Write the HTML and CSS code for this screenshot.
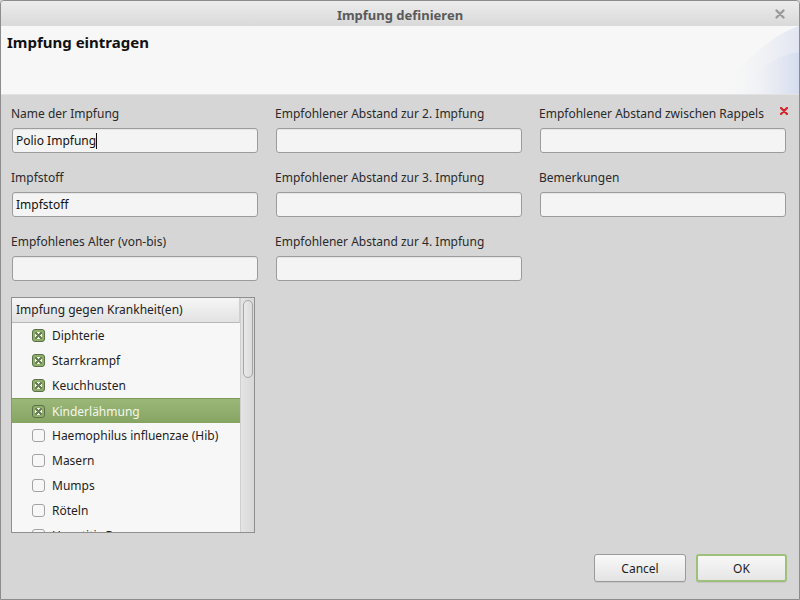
FILE: index.html
```html
<!DOCTYPE html>
<html lang="de">
<head>
<meta charset="utf-8">
<title>Impfung definieren</title>
<link rel="stylesheet" href="styles.css">
</head>
<body>
<div class="window">
  <div class="titlebar">
    <span class="title">Impfung definieren</span>
    <span class="close">
      <svg width="10" height="10" viewBox="0 0 10 10"><path d="M1.5 1.5 L8.5 8.5 M8.5 1.5 L1.5 8.5" stroke="#9a9a9a" stroke-width="2.4" stroke-linecap="round"/></svg>
    </span>
  </div>
  <div class="banner">
    <h1 class="banner-title">Impfung eintragen</h1>
    <svg class="banner-deco" width="120" height="68" viewBox="0 0 120 68" preserveAspectRatio="none">
      <defs>
        <linearGradient id="g1" x1="0" y1="0" x2="1" y2="0">
          <stop offset="0" stop-color="#f7f7f7" stop-opacity="0"/>
          <stop offset="1" stop-color="#dbe1f0"/>
        </linearGradient>
        <linearGradient id="g2" x1="0" y1="0" x2="1" y2="0">
          <stop offset="0" stop-color="#f7f7f7" stop-opacity="0"/>
          <stop offset="1" stop-color="#d6ddef"/>
        </linearGradient>
      </defs>
      <path d="M40 68 C 60 40, 90 10, 120 0 L120 68 Z" fill="url(#g1)" opacity="0.8"/>
      <path d="M60 68 C 75 45, 95 30, 120 26 L120 68 Z" fill="url(#g2)"/>
    </svg>
  </div>
  <div class="content">
    <span class="error-mark">
      <svg width="8" height="8" viewBox="0 0 8 8"><path d="M1 1 L7 7 M7 1 L1 7" stroke="#d9212b" stroke-width="2.2" stroke-linecap="round"/></svg>
    </span>
    <div class="fields">
      <div class="field">
        <label class="label">Name der Impfung</label>
        <div class="input">Polio Impfung<span class="caret"></span></div>
      </div>
      <div class="field">
        <label class="label">Empfohlener Abstand zur 2. Impfung</label>
        <div class="input"></div>
      </div>
      <div class="field">
        <label class="label">Empfohlener Abstand zwischen Rappels</label>
        <div class="input"></div>
      </div>
      <div class="field">
        <label class="label">Impfstoff</label>
        <div class="input">Impfstoff</div>
      </div>
      <div class="field">
        <label class="label">Empfohlener Abstand zur 3. Impfung</label>
        <div class="input"></div>
      </div>
      <div class="field">
        <label class="label">Bemerkungen</label>
        <div class="input"></div>
      </div>
      <div class="field">
        <label class="label">Empfohlenes Alter (von-bis)</label>
        <div class="input"></div>
      </div>
      <div class="field">
        <label class="label">Empfohlener Abstand zur 4. Impfung</label>
        <div class="input"></div>
      </div>
    </div>

    <div class="listbox">
      <div class="list-main">
        <div class="list-header">Impfung gegen Krankheit(en)</div>
        <div class="list-items">
          <div class="item"><span class="cb checked"></span>Diphterie</div>
          <div class="item"><span class="cb checked"></span>Starrkrampf</div>
          <div class="item"><span class="cb checked"></span>Keuchhusten</div>
          <div class="item selected"><span class="cb checked"></span>Kinderlähmung</div>
          <div class="item"><span class="cb"></span>Haemophilus influenzae (Hib)</div>
          <div class="item"><span class="cb"></span>Masern</div>
          <div class="item"><span class="cb"></span>Mumps</div>
          <div class="item"><span class="cb"></span>Röteln</div>
          <div class="item"><span class="cb"></span>Hepatitis B</div>
        </div>
      </div>
      <div class="scrollbar"><div class="thumb"></div></div>
    </div>

    <div class="buttons">
      <button class="btn">Cancel</button>
      <button class="btn default">OK</button>
    </div>
  </div>
</div>
</body>
</html>
```

FILE: styles.css
```css
* { box-sizing: border-box; }
html, body {
  margin: 0;
  padding: 0;
  width: 800px;
  height: 600px;
  overflow: hidden;
  background: #d6d6d6;
}
body {
  font-family: "Noto Sans", "DejaVu Sans", sans-serif;
  font-size: 12px;
  color: #1e1e1e;
}
.window {
  width: 800px;
  height: 600px;
  border: 1px solid #8c8c8c;
  border-radius: 4px 4px 0 0;
  background: #d6d6d6;
  display: flex;
  flex-direction: column;
  overflow: hidden;
}
.titlebar {
  height: 25px;
  flex: none;
  background: linear-gradient(#ececec, #d9d9d9);
  display: flex;
  align-items: center;
  justify-content: center;
  position: relative;
}
.title {
  font-weight: bold;
  font-size: 13px;
  color: #5a5a5a;
  margin-top: 2px;
}
.close {
  position: absolute;
  right: 14px;
  top: 8px;
  display: flex;
}
.banner {
  height: 69px;
  flex: none;
  background: #f7f7f7;
  position: relative;
  border-bottom: 1px solid #e2e2e2;
}
.banner-title {
  margin: 0;
  padding: 6px 0 0 6px;
  font-size: 15px;
  font-weight: bold;
  color: #111;
  line-height: 20px;
}
.banner-deco {
  position: absolute;
  right: 0;
  top: 0;
}
.content {
  flex: 1;
  position: relative;
  padding: 10px 12px 0 10px;
  display: flex;
  flex-direction: column;
}
.error-mark {
  position: absolute;
  right: 11px;
  top: 12px;
  display: flex;
}
.fields {
  display: grid;
  grid-template-columns: 247px 247px 247px;
  column-gap: 17px;
  row-gap: 16px;
}
.field {
  display: flex;
  flex-direction: column;
}
.label {
  line-height: 18px;
  height: 18px;
  color: #2a2a2a;
}
.input {
  margin-top: 5px;
  margin-left: 1px;
  height: 25px;
  border: 1px solid #9c9c9c;
  border-radius: 3px;
  background: #f4f4f4;
  box-shadow: inset 0 1px 1px rgba(0,0,0,0.06);
  padding: 0 3px;
  line-height: 23px;
  color: #111;
  display: flex;
  align-items: center;
}
.caret {
  display: inline-block;
  width: 1px;
  height: 16px;
  background: #111;
}
.listbox {
  margin-top: 16px;
  width: 244px;
  height: 236px;
  border: 1px solid #8f8f8f;
  background: #f7f7f7;
  display: flex;
  overflow: hidden;
}
.list-main {
  flex: 1;
  display: flex;
  flex-direction: column;
  overflow: hidden;
}
.list-header {
  height: 25px;
  flex: none;
  background: linear-gradient(#f6f6f6, #e2e2e2);
  border-bottom: 1px solid #b8b8b8;
  border-right: 1px solid #cfcfcf;
  padding-left: 4px;
  line-height: 24px;
  color: #222;
}
.list-items {
  display: flex;
  flex-direction: column;
}
.item {
  height: 25px;
  flex: none;
  display: flex;
  align-items: center;
  padding-left: 20px;
  color: #1e1e1e;
}
.item.selected {
  background: linear-gradient(#9bb878, #86a462);
  color: #f4f7ee;
  border-top: 1px solid #7c9a58;
}
.cb {
  width: 13px;
  height: 13px;
  border: 1px solid #a3a3a3;
  border-radius: 3px;
  background: #f7f7f7;
  margin-right: 7px;
  position: relative;
  flex: none;
}
.cb.checked {
  background: #8fb06a;
  border-color: #5c6e4a;
}
.cb.checked::after {
  content: "";
  position: absolute;
  left: 2px;
  top: 2px;
  width: 7px;
  height: 7px;
  background:
    linear-gradient(45deg, transparent 40%, #6a7e55 40%, #6a7e55 60%, transparent 60%),
    linear-gradient(-45deg, transparent 40%, #6a7e55 40%, #6a7e55 60%, transparent 60%),
    #f2f4ee;
  border-radius: 1px;
}
.scrollbar {
  width: 14px;
  flex: none;
  background: linear-gradient(90deg, #e4e4e4, #d8d8d8);
  border-left: 1px solid #cfcfcf;
  padding: 2px 1px 0 2px;
}
.thumb {
  height: 78px;
  border: 1px solid #a5a5a5;
  border-radius: 5px;
  background: linear-gradient(90deg, #e9e9e9, #dcdcdc);
  width: 10px;
}
.buttons {
  margin-top: auto;
  margin-bottom: 17px;
  display: flex;
  justify-content: flex-end;
  gap: 10px;
}
.btn {
  font-family: "Noto Sans", "DejaVu Sans", sans-serif;
  font-size: 12px;
  color: #1e1e1e;
  height: 28px;
  width: 92px;
  border: 1px solid #9a9a9a;
  border-radius: 3px;
  background: linear-gradient(#f9f9f9, #e3e3e3);
  box-shadow: 0 1px 0 rgba(0,0,0,0.08);
  padding: 0;
}
.btn.default {
  width: 91px;
  border: 2px solid #9fc078;
  background: linear-gradient(#f7f7f7, #e6e6e6);
}
```
